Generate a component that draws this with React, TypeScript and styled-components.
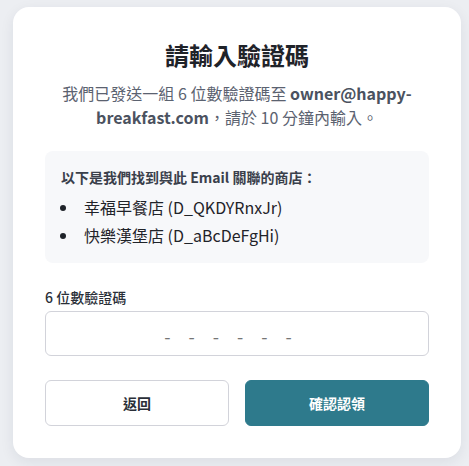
import * as React from 'react';
import styled, { createGlobalStyle } from 'styled-components';

const GlobalStyle = createGlobalStyle`
    html, body {
        margin: 0;
        padding: 0;
        background: #eceef2;
        font-family: 'Noto Sans CJK TC', 'Noto Sans', sans-serif;
    }
    * {
        box-sizing: border-box;
    }
`;

const stores = [
    { name: '幸福早餐店', id: 'D_QKDYRnxJr' },
    { name: '快樂漢堡店', id: 'D_aBcDeFgHi' },
];

export default () => {
    const [code, setCode] = React.useState('');
    return (
        <>
            <GlobalStyle />
            <Page>
                <Card>
                    <Title>請輸入驗證碼</Title>
                    <Description>
                        我們已發送一組 6 位數驗證碼至 <strong>owner@happy-breakfast.com</strong>，請於 10 分鐘內輸入。
                    </Description>

                    <StoreBox>
                        <StoreHeading>以下是我們找到與此 Email 關聯的商店：</StoreHeading>
                        <StoreList>
                            {stores.map((s) => (
                                <li key={s.id}>
                                    {s.name} ({s.id})
                                </li>
                            ))}
                        </StoreList>
                    </StoreBox>

                    <Field>
                        <Label htmlFor="code">6 位數驗證碼</Label>
                        <CodeInput
                            id="code"
                            value={code}
                            maxLength={6}
                            placeholder="------"
                            onChange={(e) => setCode(e.target.value)}
                        />
                    </Field>

                    <Actions>
                        <Button variant={'outline'}>返回</Button>
                        <Button variant={'primary'}>確認認領</Button>
                    </Actions>
                </Card>
            </Page>
        </>
    );
};

const Page = styled.div`
    min-height: 466px;
    padding: 7px 8px 8px 13px;
`;

const Card = styled.div`
    width: 448px;
    background: white;
    border-radius: 16px;
    padding: 32px;
    box-shadow: 0 4px 14px rgba(30, 40, 60, 0.08);
`;

const Title = styled.h1`
    margin: 0 0 10px;
    text-align: center;
    font: 700 24px/32px 'Noto Sans CJK TC', 'Noto Sans', sans-serif;
    color: #1f2329;
`;

const Description = styled.p`
    margin: 0 0 22px;
    text-align: center;
    font-size: 16px;
    line-height: 24px;
    color: #5b6270;
    > strong {
        font-weight: 700;
        color: #4b5260;
    }
`;

const StoreBox = styled.div`
    background: #f7f8fa;
    border-radius: 8px;
    padding: 16px;
`;

const StoreHeading = styled.div`
    font-size: 14px;
    line-height: 20px;
    font-weight: 700;
    color: #3a404b;
    margin-bottom: 8px;
`;

const StoreList = styled.ul`
    margin: 0;
    padding-left: 18px;
    > li {
        font-size: 16px;
        line-height: 24px;
        color: #1f2329;
        padding-left: 5px;
        margin-top: 4px;
    }
    > li:first-child {
        margin-top: 0;
    }
`;

const Field = styled.div`
    margin-top: 24px;
    display: flex;
    flex-direction: column;
    gap: 4px;
`;

const Label = styled.label`
    font-size: 14px;
    line-height: 20px;
    font-weight: 500;
    color: #2a2f38;
`;

const CodeInput = styled.input`
    height: 45px;
    width: 100%;
    border: 1px solid #d2d3da;
    border-radius: 6px;
    background: white;
    text-align: center;
    font: 400 18px 'Noto Sans CJK TC', 'Noto Sans', sans-serif;
    letter-spacing: 18px;
    padding: 4px 0 0 0;
    color: #1f2329;
    outline: none;
    ::placeholder {
        color: #a3a7b1;
    }
`;

const Actions = styled.div`
    margin-top: 24px;
    display: grid;
    grid-template-columns: 1fr 1fr;
    gap: 16px;
`;

const Button = styled.button<{ variant: 'outline' | 'primary' }>`
    height: 46px;
    border-radius: 6px;
    cursor: pointer;
    font: 700 14px 'Noto Sans CJK TC', 'Noto Sans', sans-serif;
    border: 1px solid ${({ variant }) => (variant === 'primary' ? '#2e7a8c' : '#d2d3da')};
    background: ${({ variant }) => (variant === 'primary' ? '#2e7a8c' : 'white')};
    color: ${({ variant }) => (variant === 'primary' ? 'white' : '#2a2f38')};
`;
